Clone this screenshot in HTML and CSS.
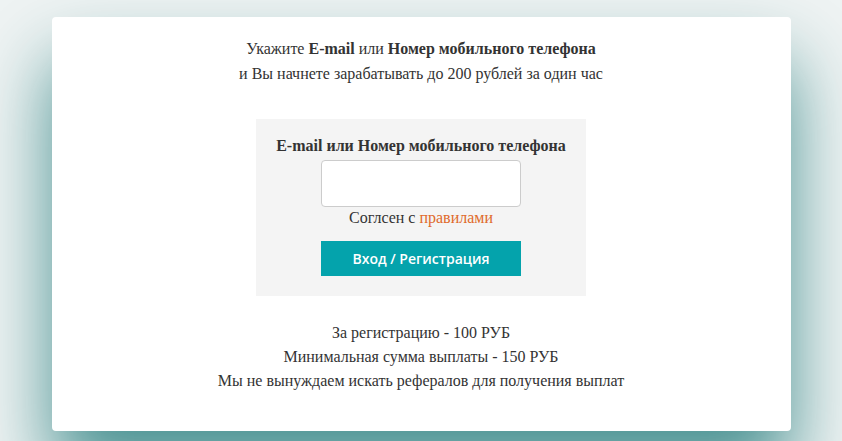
FILE: index.html
```html
<!DOCTYPE html>
<html lang="ru">
<head>
<meta charset="utf-8">
<title>Регистрация</title>
<link rel="stylesheet" href="styles.css">
</head>
<body>
<div class="card">
  <div class="intro">
    <p>Укажите <b>E-mail</b> или <b>Номер мобильного телефона</b></p>
    <p>и Вы начнете зарабатывать до 200 рублей за один час</p>
  </div>
  <form class="login-box">
    <div class="label">E-mail или Номер мобильного телефона</div>
    <input class="field" type="text">
    <div class="agree">Соглсен с <a href="#" class="rules">правилами</a></div>
    <button type="button" class="btn">Вход / Регистрация</button>
  </form>
  <div class="info">
    <p>За регистрацию - 100 РУБ</p>
    <p>Минимальная сумма выплаты - 150 РУБ</p>
    <p>Мы не вынуждаем искать рефералов для получения выплат</p>
  </div>
</div>
</body>
</html>
```

FILE: styles.css
```css
html, body {
  margin: 0;
  height: 100%;
  overflow: hidden;
}
body {
  background: #eff3f3;
  font-family: "Liberation Serif", "Times New Roman", serif;
  font-size: 16px;
  color: #333;
  padding-top: 17px;
  box-sizing: border-box;
}
.card {
  width: 739px;
  height: 414px;
  margin: 0 auto;
  background: #fff;
  border-radius: 4px;
  box-shadow: 0 45px 75px rgba(72, 145, 145, 1);
  text-align: center;
  padding-top: 19px;
  box-sizing: border-box;
}
.intro p, .info p {
  margin: 0;
  line-height: 25px;
}
.login-box {
  display: inline-block;
  margin-top: 33px;
  background: #f4f4f4;
  padding: 17px 20px 20px;
}
.label {
  font-weight: bold;
  line-height: 20px;
  margin-bottom: 4px;
}
.field {
  display: block;
  margin: 0 auto;
  width: 200px;
  height: 47px;
  box-sizing: border-box;
  border: 1px solid #cccccc;
  border-radius: 4px;
  background: #fff;
}
.agree {
  line-height: 22px;
}
.rules {
  color: #e06a2b;
  text-decoration: none;
}
.btn {
  display: block;
  margin: 12px auto 0;
  width: 200px;
  height: 35px;
  border: 0;
  background: #04a3ac;
  color: #fff;
  font-family: "Open Sans", "Noto Sans", sans-serif;
  font-weight: 600;
  font-size: 14px;
  padding: 0;
}
.info {
  margin-top: 25px;
}
.info p {
  line-height: 24px;
}
```
